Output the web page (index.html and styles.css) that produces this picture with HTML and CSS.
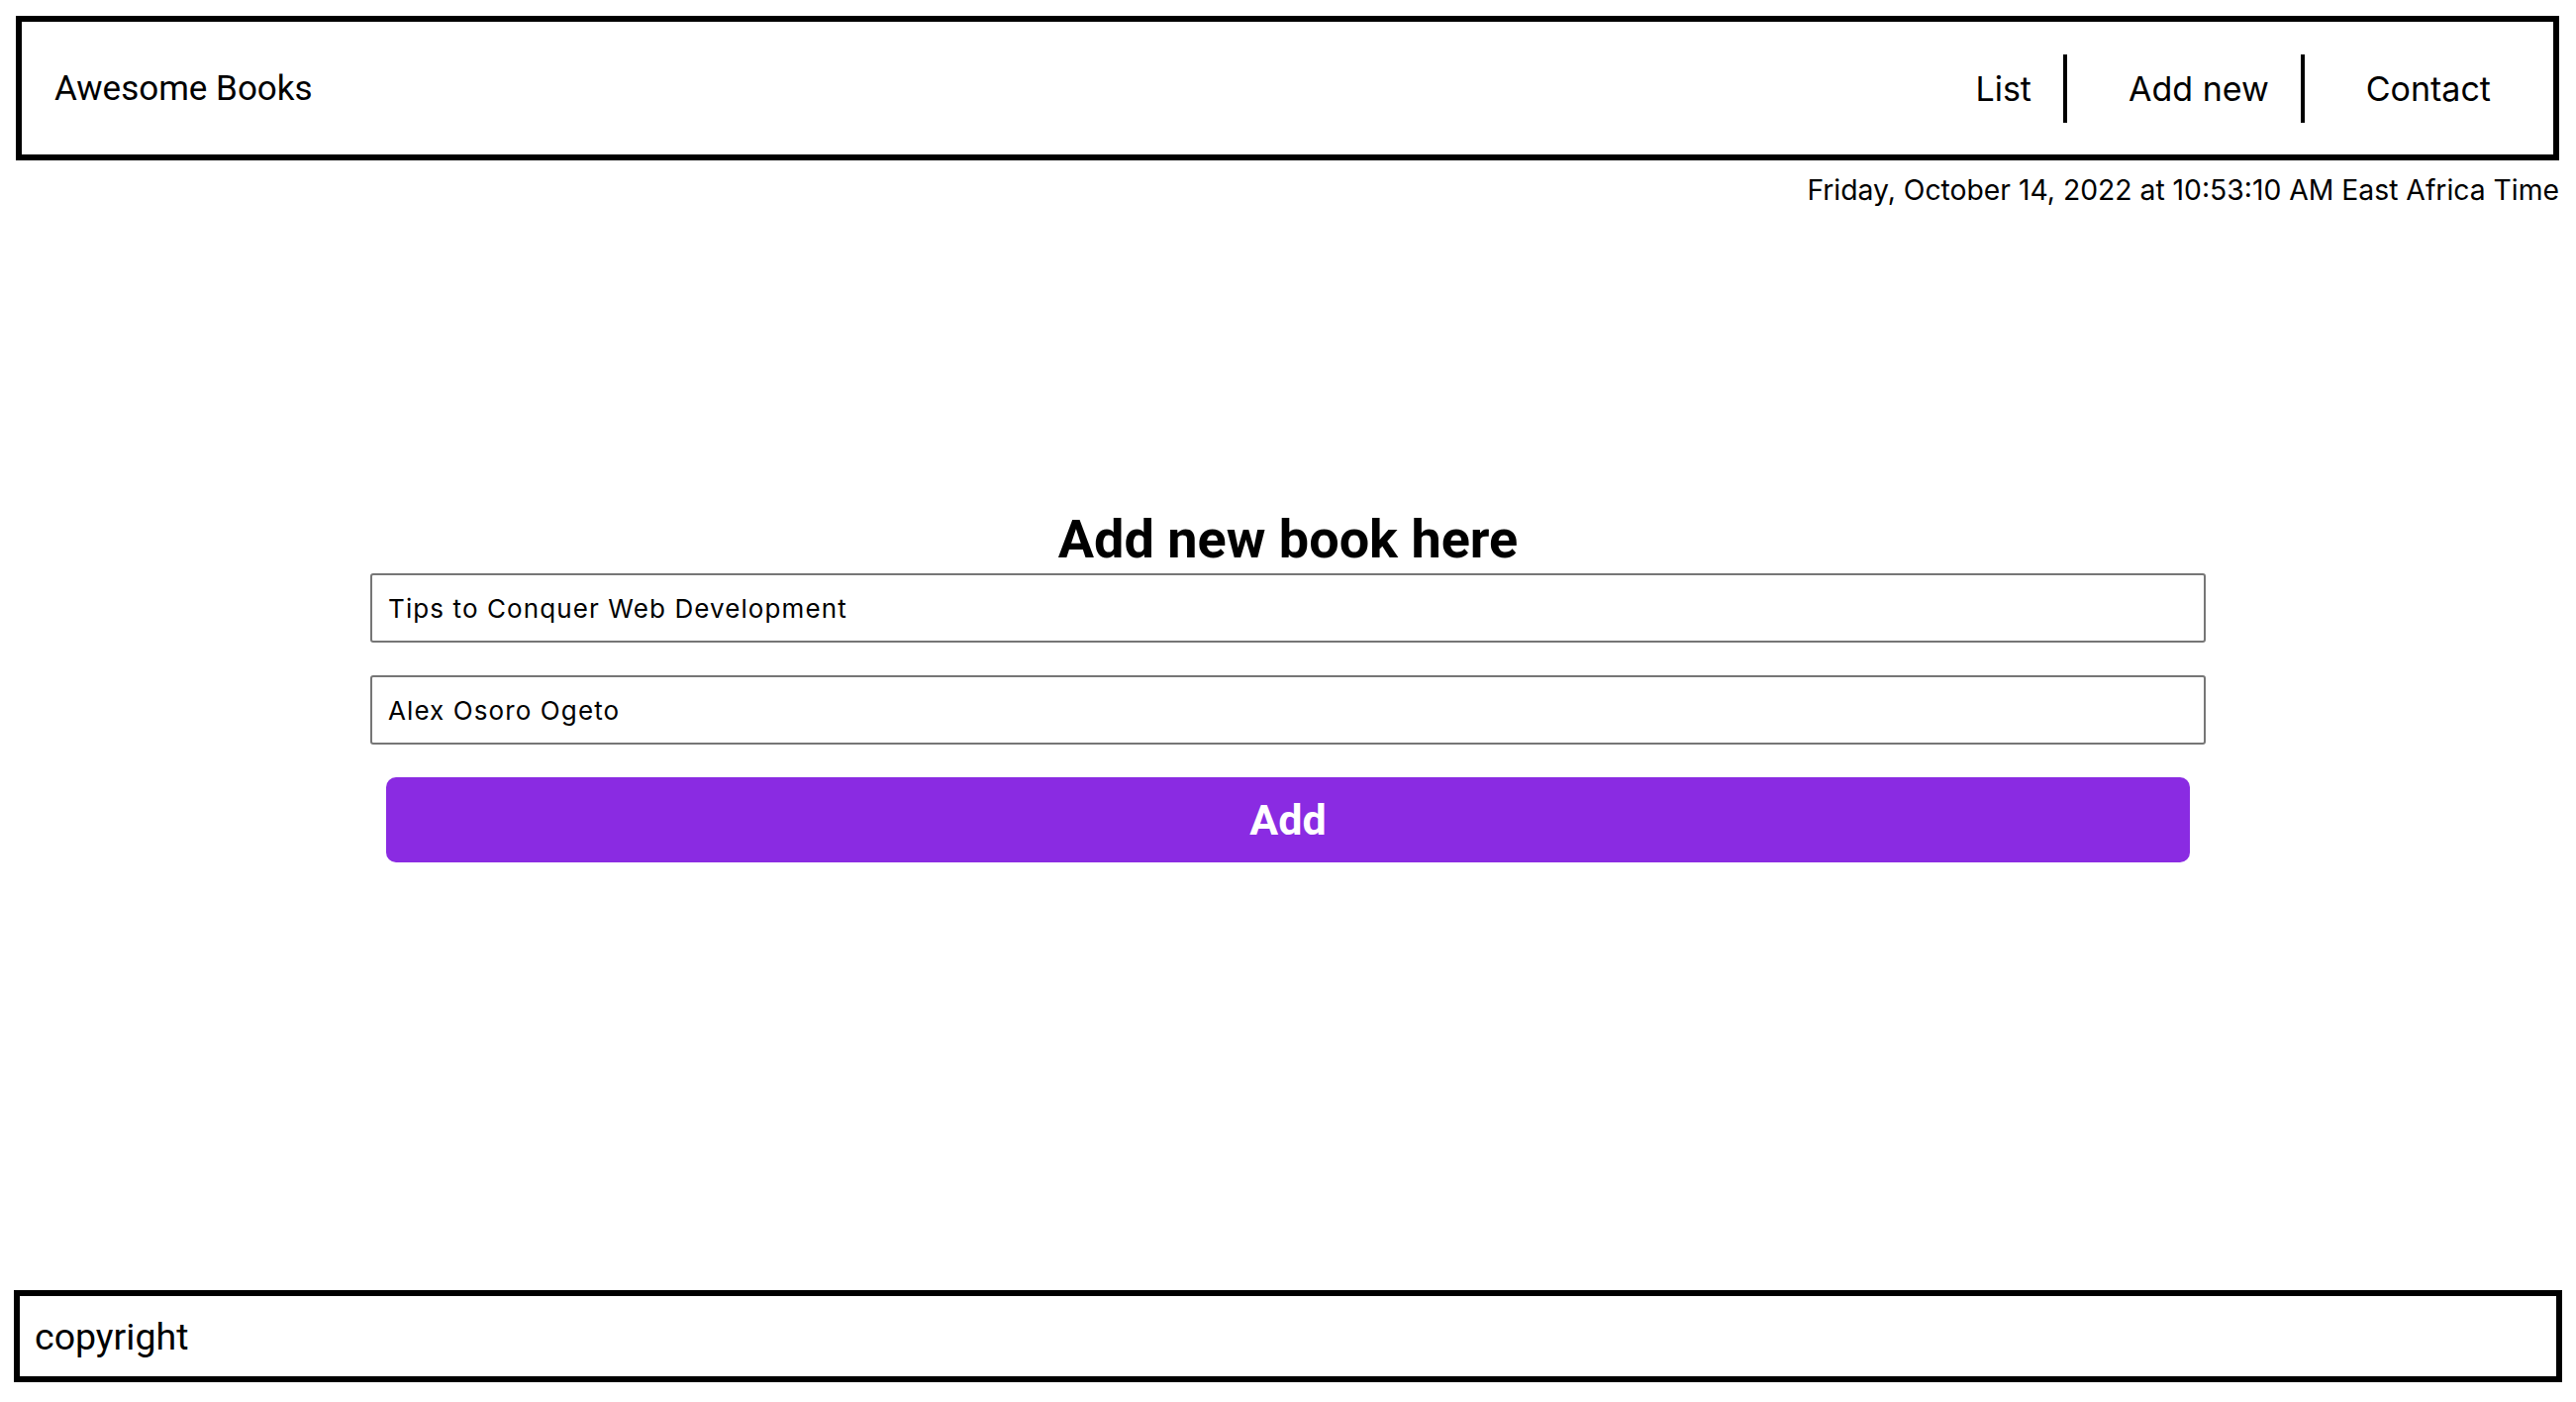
FILE: index.html
```html
<!DOCTYPE html>
<html lang="en">
<head>
<meta charset="utf-8">
<title>Awesome Books</title>
<link rel="stylesheet" href="styles.css">
</head>
<body>
<header class="topbar">
  <span class="brand">Awesome Books</span>
  <nav class="nav">
    <a class="nav-link" href="#">List</a>
    <a class="nav-link" href="#">Add new</a>
    <a class="nav-link" href="#">Contact</a>
  </nav>
</header>
<p class="date">Friday, October 14, 2022 at 10:53:10 AM East Africa Time</p>
<main class="content">
  <h1 class="title">Add new book here</h1>
  <form class="book-form">
    <input class="field" type="text" value="Tips to Conquer Web Development">
    <input class="field" type="text" value="Alex Osoro Ogeto">
    <button class="add-btn" type="button">Add</button>
  </form>
</main>
<footer class="footer">copyright</footer>
</body>
</html>
```
FILE: styles.css
```css
html, body { margin: 0; padding: 0; }
body {
  min-height: 100vh;
  display: flex;
  flex-direction: column;
  font-family: "Inter", "Noto Sans", sans-serif;
  color: #000;
  background: #fff;
}
.topbar {
  margin: 16px 17px 0 16px;
  height: 146px;
  box-sizing: border-box;
  border: 6px solid #000;
  display: flex;
  align-items: center;
  justify-content: space-between;
  padding-left: 33px;
  padding-right: 31px;
}
.brand { font-family: "Roboto", sans-serif; font-size: 35px; }
.nav { display: flex; align-items: center; }
.nav-link {
  color: #000;
  text-decoration: none;
  font-family: "Inter", sans-serif;
  font-size: 34px;
  padding: 0 32px 0 62px;
  line-height: 69px;
  border-right: 4px solid #000;
}
.nav-link:first-child { padding-left: 0; }
.nav-link:last-child { border-right: 0; }
.date {
  margin: 13px 17px 0 0;
  text-align: right;
  font-family: "Inter", sans-serif;
  font-size: 28.3px;
}
.content {
  flex: 1;
  display: flex;
  flex-direction: column;
  align-items: center;
  padding-top: 309px;
}
.title {
  margin: 0 0 7px;
  font-family: "Roboto", sans-serif;
  font-weight: 700;
  font-size: 54px;
  line-height: 1;
}
.book-form { display: flex; flex-direction: column; align-items: center; gap: 33px; }
.field {
  width: 1854px;
  height: 70px;
  box-sizing: border-box;
  border: 2px solid #767676;
  border-radius: 3px;
  padding: 0 16px;
  font-family: "Inter", sans-serif;
  font-size: 26px;
  letter-spacing: 1.1px;
  color: #000;
}
.add-btn {
  width: 1822px;
  height: 86px;
  border: 0;
  border-radius: 10px;
  background: #8a2be2;
  color: #fff;
  font-family: "Roboto", sans-serif;
  font-weight: 700;
  font-size: 43px;
}
.footer {
  margin: 0 14px 20px;
  height: 93px;
  box-sizing: border-box;
  border: 6px solid #000;
  padding-left: 15px;
  display: flex;
  align-items: center;
  font-family: "Roboto", sans-serif;
  font-size: 37.5px;
}
```
